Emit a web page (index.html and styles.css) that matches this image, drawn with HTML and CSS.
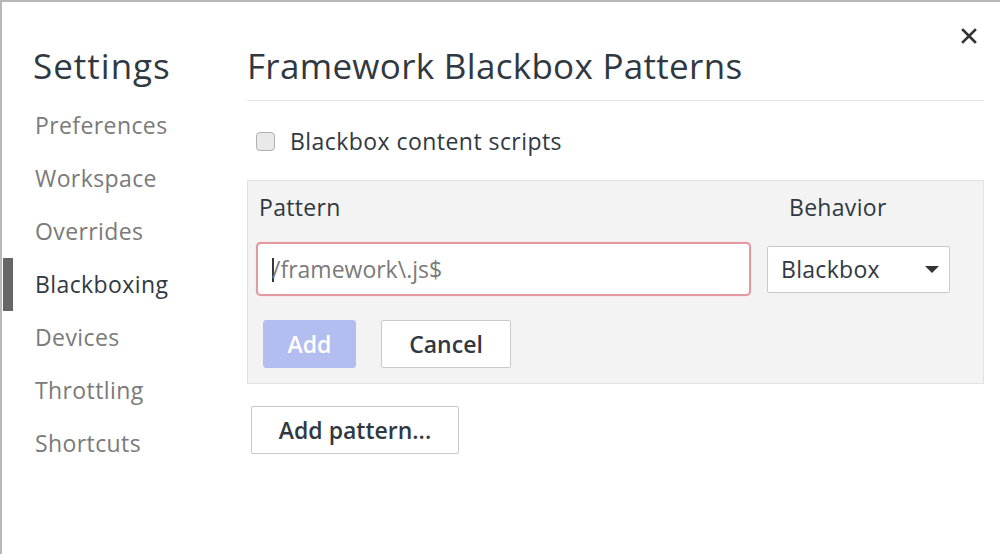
FILE: index.html
```html
<!DOCTYPE html>
<html>
<head>
<meta charset="utf-8">
<link rel="stylesheet" href="styles.css">
</head>
<body>
<div class="dialog">
  <aside class="sidebar">
    <div class="sidebar-title">Settings</div>
    <nav class="nav">
      <div class="nav-item">Preferences</div>
      <div class="nav-item">Workspace</div>
      <div class="nav-item">Overrides</div>
      <div class="nav-item active">Blackboxing</div>
      <div class="nav-item">Devices</div>
      <div class="nav-item">Throttling</div>
      <div class="nav-item">Shortcuts</div>
    </nav>
  </aside>
  <main class="content">
    <div class="content-title">Framework Blackbox Patterns</div>
    <label class="check-row">
      <span class="checkbox"></span>
      <span class="check-label">Blackbox content scripts</span>
    </label>
    <div class="editor">
      <div class="editor-labels">
        <span class="lbl-pattern">Pattern</span>
        <span class="lbl-behavior">Behavior</span>
      </div>
      <div class="editor-fields">
        <div class="pattern-input"><span class="caret"></span>/framework\.js$</div>
        <div class="select">
          <span>Blackbox</span>
          <svg class="arrow" width="14" height="8" viewBox="0 0 14 8"><path d="M0 0 L14 0 L7 7 Z" fill="#333"/></svg>
        </div>
      </div>
      <div class="editor-buttons">
        <div class="btn btn-primary">Add</div>
        <div class="btn">Cancel</div>
      </div>
    </div>
    <div class="btn btn-add-pattern">Add pattern...</div>
  </main>
  <div class="close">
    <svg width="16" height="16" viewBox="0 0 16 16"><path d="M2 2 L14 14 M14 2 L2 14" stroke="#333" stroke-width="2.6" stroke-linecap="square"/></svg>
  </div>
</div>
</body>
</html>
```
FILE: styles.css
```css
html, body {
  margin: 0;
  padding: 0;
  background: #ffffff;
}
body {
  font-family: "Open Sans", "Noto Sans", sans-serif;
  color: #303942;
}
.dialog {
  position: relative;
  width: 1000px;
  height: 554px;
  box-sizing: border-box;
  border-top: 2px solid #b8b8b8;
  border-left: 2px solid #b8b8b8;
  display: flex;
  overflow: hidden;
}
.sidebar {
  width: 245px;
  flex: none;
}
.sidebar-title {
  font-size: 35px;
  line-height: 40px;
  padding-left: 31px;
  padding-top: 44px;
  height: 53px;
  letter-spacing: 1px;
}
.nav-item {
  position: relative;
  height: 53px;
  line-height: 53px;
  padding-left: 33px;
  font-size: 23px;
  letter-spacing: 0.4px;
  color: #7a7a7a;
}
.nav-item.active {
  color: #303942;
}
.nav-item.active::before {
  content: "";
  position: absolute;
  left: 1px;
  top: 0;
  width: 10px;
  height: 53px;
  background: #666666;
}
.content {
  flex: 1;
}
.content-title {
  font-size: 35px;
  line-height: 40px;
  padding-top: 44px;
  padding-bottom: 14px;
  width: 737px;
  border-bottom: 1px solid #e6e6e6;
  letter-spacing: 0.3px;
}
.check-row {
  display: flex;
  align-items: center;
  height: 40px;
  margin-top: 20px;
  padding-left: 9px;
}
.checkbox {
  width: 17px;
  height: 17px;
  border: 1.5px solid #b0b0b0;
  border-radius: 4px;
  background: #e9e9e9;
  margin-right: 15px;
}
.check-label {
  font-size: 23px;
  letter-spacing: 0.45px;
}
.editor {
  margin-top: 19px;
  width: 735px;
  height: 202px;
  border: 1px solid #e2e2e2;
  background: #f3f3f3;
}
.editor-labels {
  display: flex;
  height: 30px;
  margin-top: 11px;
  font-size: 23px;
  line-height: 30px;
  letter-spacing: 0.3px;
}
.lbl-pattern {
  padding-left: 11px;
  width: 530px;
}
.editor-fields {
  display: flex;
  align-items: center;
  margin-top: 20px;
  padding-left: 8px;
  gap: 16px;
}
.pattern-input {
  width: 477px;
  height: 50px;
  border: 2px solid #e3999f;
  border-radius: 5px;
  background: #ffffff;
  padding-left: 14px;
  font-size: 23px;
  line-height: 50px;
  color: #7a7a7a;
  box-shadow: 0 0 1px #e3999f;
}
.caret {
  display: inline-block;
  width: 2px;
  height: 24px;
  margin-right: -2px;
  background: #303942;
  vertical-align: -4px;
}
.select {
  width: 183px;
  height: 47px;
  background: #ffffff;
  border: 1px solid #c9c9c9;
  border-radius: 2px;
  display: flex;
  align-items: center;
  justify-content: space-between;
  padding: 0 10px 0 13px;
  box-sizing: border-box;
  font-size: 23px;
  letter-spacing: 0.3px;
}
.arrow {
  margin-top: 2px;
}
.editor-buttons {
  display: flex;
  gap: 25px;
  margin-top: 24px;
  padding-left: 15px;
}
.btn {
  height: 48px;
  box-sizing: border-box;
  border: 1px solid #cacaca;
  border-radius: 2px;
  background: #ffffff;
  display: flex;
  align-items: center;
  justify-content: center;
  font-size: 23px;
  font-weight: 600;
  color: #303942;
  width: 130px;
}
.btn-primary {
  width: 93px;
  background: #b3bdf0;
  border-color: #b3bdf0;
  color: #ffffff;
  border-radius: 3px;
}
.btn-add-pattern {
  margin-top: 22px;
  margin-left: 4px;
  width: 208px;
  height: 48px;
}
.close {
  position: absolute;
  right: 23px;
  top: 25px;
  width: 16px;
  height: 16px;
}
```
